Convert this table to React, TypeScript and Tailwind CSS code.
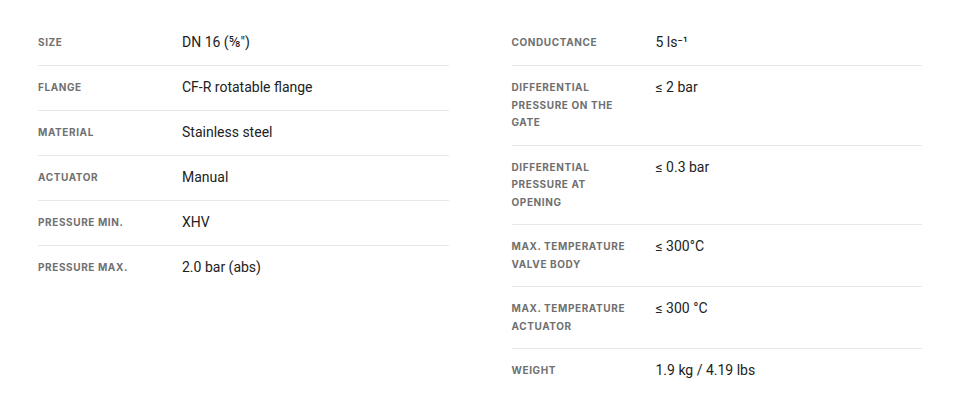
const left: [string, string][] = [
  ['Size', 'DN 16 (⅝")'],
  ['Flange', 'CF-R rotatable flange'],
  ['Material', 'Stainless steel'],
  ['Actuator', 'Manual'],
  ['Pressure min.', 'XHV'],
  ['Pressure max.', '2.0 bar (abs)'],
];

const right: [string, string][] = [
  ['Conductance', '5 ls⁻¹'],
  ['Differential pressure on the gate', '≤ 2 bar'],
  ['Differential pressure at opening', '≤ 0.3 bar'],
  ['Max. temperature valve body', '≤ 300°C'],
  ['Max. temperature actuator', '≤ 300 °C'],
  ['Weight', '1.9 kg / 4.19 lbs'],
];

const SpecList = ({ rows }: { rows: [string, string][] }) => (
  <div className="flex flex-col">
    {rows.map(([label, value], i) => (
      <div
        key={label}
        className={`flex items-start py-[13px] ${i > 0 ? 'border-t border-[#e8e8e8]' : ''}`}
      >
        <div className="w-[144px] shrink-0 pr-[22px] font-['Inter',sans-serif] text-[10px] font-bold uppercase leading-[17.5px] tracking-[0.06em] text-[#707070]">
          {label}
        </div>
        <div className="-mt-[1px] pb-[1px] font-['Roboto',sans-serif] text-[14px] leading-[18px] text-[#222]">
          {value}
        </div>
      </div>
    ))}
  </div>
);

export default function App() {
  return (
    <div className="h-[410px] w-[960px] bg-white px-[38px] pt-[21px]">
      <div className="grid grid-cols-2 gap-x-[63px]">
        <SpecList rows={left} />
        <SpecList rows={right} />
      </div>
    </div>
  );
}
